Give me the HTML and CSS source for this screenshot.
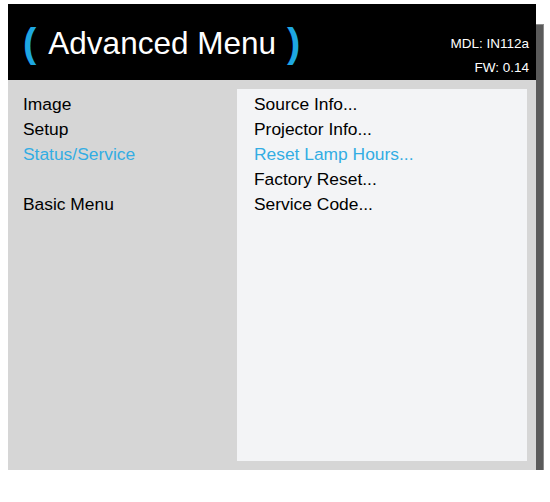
FILE: index.html
```html
<!DOCTYPE html>
<html>
<head>
<meta charset="utf-8">
<link rel="stylesheet" href="styles.css">
</head>
<body>
<div class="frame">
  <div class="header">
    <div class="title"><span class="br">(</span><span class="name">Advanced Menu</span><span class="br">)</span></div>
    <div class="info">
      <div class="mdl">MDL: IN112a</div>
      <div class="fw">FW: 0.14</div>
    </div>
  </div>
  <div class="body">
    <ul class="menu">
      <li>Image</li>
      <li>Setup</li>
      <li class="active">Status/Service</li>
      <li class="gap"></li>
      <li>Basic Menu</li>
    </ul>
    <div class="panel">
      <ul class="menu sub">
        <li>Source Info...</li>
        <li>Projector Info...</li>
        <li class="active">Reset Lamp Hours...</li>
        <li>Factory Reset...</li>
        <li>Service Code...</li>
      </ul>
    </div>
  </div>
</div>
</body>
</html>
```

FILE: styles.css
```css
html, body {
  margin: 0;
  padding: 0;
  background: #ffffff;
}
body {
  font-family: "Liberation Sans", Arial, sans-serif;
}
.frame {
  position: relative;
  margin: 4px 0 0 8px;
  width: 528px;
  height: 466px;
  z-index: 0;
}
.frame::before {
  content: "";
  position: absolute;
  left: 10px;
  top: 20px;
  width: 524px;
  height: 456px;
  background: #5a5a5a;
  border: 1px solid #8c8c8c;
  z-index: -1;
}
.header {
  height: 76px;
  background: #000000;
  display: flex;
  justify-content: space-between;
  align-items: stretch;
  padding: 0 7px 0 15px;
}
.title {
  display: flex;
  align-items: center;
  color: #ffffff;
  margin-top: 2px;
}
.title .br {
  color: #1ea7e1;
  font-size: 40px;
  font-weight: bold;
  line-height: 1;
}
.title .name {
  font-size: 31.5px;
  margin: 0 11px 0 12px;
}
.info {
  color: #ffffff;
  font-size: 13.5px;
  text-align: right;
  padding-top: 32px;
}
.info .fw {
  margin-top: 9px;
}
.body {
  height: 390px;
  background: #d6d6d6;
  display: flex;
}
.menu {
  list-style: none;
  margin: 0;
  padding: 0;
  font-size: 17.4px;
  line-height: 25px;
  color: #000000;
}
.body > .menu {
  width: 214px;
  padding: 12px 0 0 15px;
}
.menu li.gap {
  height: 25px;
}
.menu li.active {
  color: #33ade3;
}
.panel {
  flex: 1;
  margin: 9px 9px 9px 0;
  background: #f3f4f6;
  padding: 3px 0 0 17px;
}
```
